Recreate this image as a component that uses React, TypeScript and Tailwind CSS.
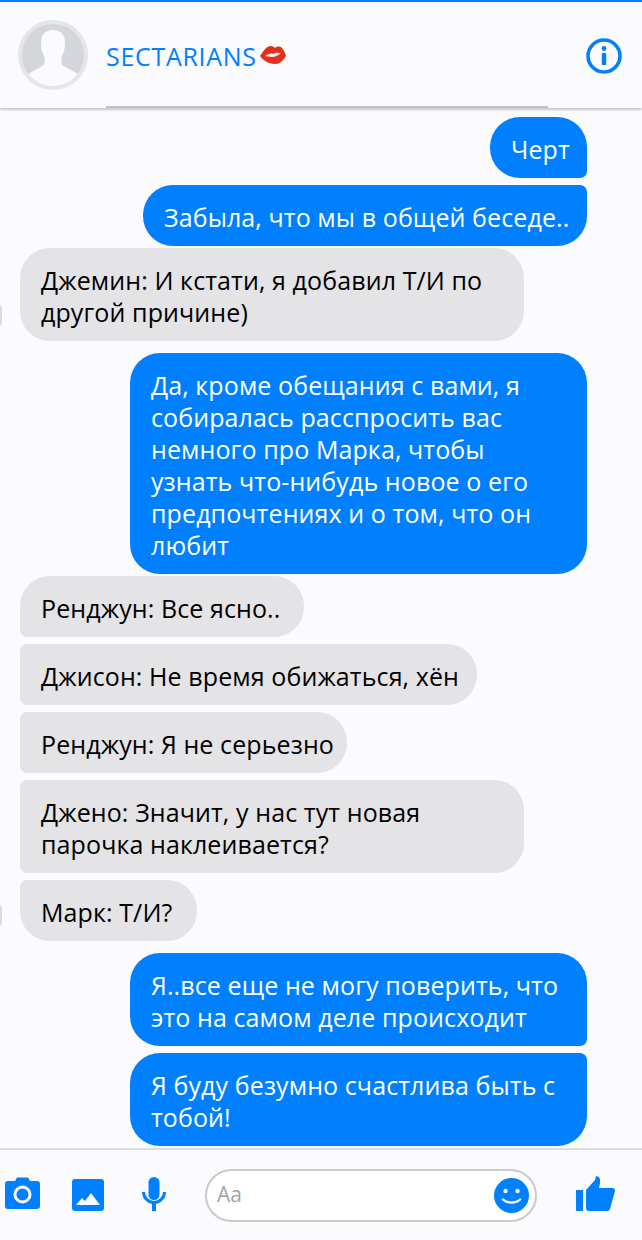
const FONT = "font-['Open_Sans',sans-serif]";

type Msg = {
  side: "left" | "right";
  lines: string[];
  width: string;
  top: string;
  corners: string;
  avatar?: boolean;
};

const messages: Msg[] = [
  { side: "right", lines: ["Черт"], width: "w-[97px]", top: "mt-[9px]", corners: "rounded-tl-[30px] rounded-tr-[30px] rounded-br-[7px] rounded-bl-[30px]" },
  { side: "right", lines: ["Забыла, что мы в общей беседе.."], width: "w-[444px]", top: "mt-[7px]", corners: "rounded-tl-[30px] rounded-tr-[7px] rounded-br-[30px] rounded-bl-[30px]" },
  { side: "left", lines: ["Джемин: И кстати, я добавил Т/И по", "другой причине)"], width: "w-[504px]", top: "mt-[2px]", corners: "rounded-[30px]", avatar: true },
  {
    side: "right",
    lines: [
      "Да, кроме обещания с вами, я",
      "собиралась расспросить вас",
      "немного про Марка, чтобы",
      "узнать что-нибудь новое о его",
      "предпочтениях и о том, что он",
      "любит",
    ],
    width: "w-[457px]",
    top: "mt-[12px]",
    corners: "rounded-[30px]",
  },
  { side: "left", lines: ["Ренджун: Все ясно.."], width: "w-[284px]", top: "mt-[2px]", corners: "rounded-tl-[30px] rounded-tr-[30px] rounded-br-[30px] rounded-bl-[7px]" },
  { side: "left", lines: ["Джисон: Не время обижаться, хён"], width: "w-[457px]", top: "mt-[7px]", corners: "rounded-tl-[7px] rounded-tr-[30px] rounded-br-[30px] rounded-bl-[7px]" },
  { side: "left", lines: ["Ренджун: Я не серьезно"], width: "w-[327px]", top: "mt-[7px]", corners: "rounded-tl-[7px] rounded-tr-[30px] rounded-br-[30px] rounded-bl-[7px]" },
  { side: "left", lines: ["Джено: Значит, у нас тут новая", "парочка наклеивается?"], width: "w-[504px]", top: "mt-[7px]", corners: "rounded-tl-[7px] rounded-tr-[30px] rounded-br-[30px] rounded-bl-[7px]" },
  { side: "left", lines: ["Марк: Т/И?"], width: "w-[177px]", top: "mt-[7px]", corners: "rounded-tl-[7px] rounded-tr-[30px] rounded-br-[30px] rounded-bl-[30px]", avatar: true },
  { side: "right", lines: ["Я..все еще не могу поверить, что", "это на самом деле происходит"], width: "w-[457px]", top: "mt-[12px]", corners: "rounded-tl-[30px] rounded-tr-[30px] rounded-br-[7px] rounded-bl-[30px]" },
  { side: "right", lines: ["Я буду безумно счастлива быть с", "тобой!"], width: "w-[457px]", top: "mt-[7px]", corners: "rounded-tl-[30px] rounded-tr-[7px] rounded-br-[30px] rounded-bl-[30px]" },
];

function Bubble({ msg }: { msg: Msg }) {
  const isRight = msg.side === "right";
  return (
    <div className={`relative ${msg.top} flex ${isRight ? "justify-end pr-[55px]" : "justify-start pl-[20px]"}`}>
      {msg.avatar && <span className="absolute left-[-13px] bottom-[12px] h-[27px] w-[15px] rounded-full bg-[#dcdbde]" />}
      <div
        className={`${msg.width} ${msg.corners} ${
          isRight ? "bg-[#0080ff] text-white" : "bg-[#e4e3e6] text-black"
        } px-[21px] pt-[16px] pb-[13px] text-[25px] leading-[32px] tracking-[0.1px] whitespace-nowrap`}
      >
        {msg.lines.map((line) => (
          <div key={line}>{line}</div>
        ))}
      </div>
    </div>
  );
}

function Avatar() {
  return (
    <svg width="70" height="70" viewBox="0 0 70 70" className="shrink-0">
      <clipPath id="avatarClip">
        <circle cx="35" cy="35" r="31" />
      </clipPath>
      <circle cx="35" cy="35" r="33" fill="#d3d7dc" stroke="#e5e6ea" strokeWidth="4" />
      <g clipPath="url(#avatarClip)" fill="#fbfafd">
        <path d="M35 10c8 0 12 5 12 13 0 5-1 9-3 13-1 3-1 6 0 9l16 9v16H10V54l16-9c1-3 1-6 0-9-2-4-3-8-3-13 0-8 4-13 12-13z" />
      </g>
    </svg>
  );
}

function Kiss() {
  return (
    <svg width="26" height="20" viewBox="0 0 26 20" className="ml-[3px] mt-[-2px] shrink-0">
      <path d="M0 11C3 7 6 1 11 1c2 0 3 1 4 2 2-2 5-2 7 0 2 2 3 5 4 8-2 3-5 8-11 8C8 19 3 15 0 11z" fill="#e2301f" />
      <path d="M5 11c3-2 6-3 8-2 3-2 6-1 8-1-2 2-6 4-9 4-3 0-5-1-7-1z" fill="#fdeeee" />
    </svg>
  );
}

export default function App() {
  return (
    <div className={`relative flex h-[1240px] w-[642px] flex-col overflow-hidden bg-[#fbfafd] ${FONT}`}>
      <header className="relative flex h-[108px] shrink-0 items-center border-t-[2px] border-[#0080ff] bg-[#fbfafd] pl-[18px] pr-[20px] shadow-[0_2px_2px_rgba(0,0,0,0.2)]">
        <Avatar />
        <div className="ml-[18px] mt-[2px] flex items-center text-[25px] leading-[30px] tracking-[0.7px] text-[#0080ff]">
          <span>SECTARIANS</span>
          <Kiss />
        </div>
        <svg width="36" height="36" viewBox="0 0 36 36" className="ml-auto mt-[2px]">
          <circle cx="18" cy="18" r="16" fill="none" stroke="#0080ff" strokeWidth="3.5" />
          <circle cx="18" cy="10.5" r="2.4" fill="#0080ff" />
          <rect x="15.8" y="15" width="4.4" height="12" rx="1" fill="#0080ff" />
        </svg>
        {/* darker run of the divider under the title */}
        <span className="absolute bottom-0 left-[106px] h-[2px] w-[442px] bg-[#c4c3c6]" />
      </header>

      <main className="h-[1040px] shrink-0">
        {messages.map((m) => (
          <Bubble key={m.lines[0]} msg={m} />
        ))}
      </main>

      <footer className="flex h-[92px] shrink-0 items-center border-t-[2px] border-[#dedddf] pl-[5px]">
        {/* camera */}
        <svg width="35" height="32" viewBox="0 0 35 32" className="mt-[-5px]">
          <path d="M3 4h7l2-3.5h11L25 4h7a3 3 0 0 1 3 3v22a3 3 0 0 1-3 3H3a3 3 0 0 1-3-3V7a3 3 0 0 1 3-3z" fill="#0080ff" />
          <circle cx="17.5" cy="17.5" r="7.5" fill="none" stroke="#fbfafd" strokeWidth="3" />
        </svg>
        {/* picture */}
        <svg width="32" height="32" viewBox="0 0 32 32" className="ml-[32px] mt-[-1px]">
          <rect width="32" height="32" rx="3" fill="#0080ff" />
          <path d="M4 26l6-7 3 3 6-8 9 12z" fill="#fbfafd" />
        </svg>
        {/* mic */}
        <svg width="24" height="34" viewBox="0 0 24 34" className="ml-[38px] mt-[-2px]">
          <rect x="6.5" y="0" width="11" height="23" rx="5.5" fill="#0080ff" />
          <path d="M1.5 15a10.5 10.5 0 0 0 21 0" fill="none" stroke="#0080ff" strokeWidth="3" />
          <rect x="10" y="25" width="4" height="9" fill="#0080ff" />
        </svg>
        <div className="ml-[39px] flex h-[53px] w-[332px] items-center rounded-full border-[2px] border-[#cbc9cc] bg-white pl-[10px] pr-[6px]">
          <span className="text-[21px] text-[#a3a3a6]">Aa</span>
          <svg width="35" height="35" viewBox="0 0 35 35" className="ml-auto">
            <circle cx="17.5" cy="17.5" r="17.5" fill="#0080ff" />
            <circle cx="11.5" cy="13" r="2.2" fill="#fff" />
            <circle cx="23.5" cy="13" r="2.2" fill="#fff" />
            <path d="M9 21.5c4 4 13 4 17 0" fill="none" stroke="#fff" strokeWidth="2.4" strokeLinecap="round" />
          </svg>
        </div>
        <svg width="39" height="35" viewBox="0 0 39 35" className="ml-[39px] mt-[-4px]">
          <rect x="0" y="14" width="7" height="21" fill="#0080ff" />
          <path d="M10 14 19 4l1-4 3 1c2 3 1 7 0 11h13c2 0 3 1 3 3l-5 18c-.5 1.5-1.5 2-3 2H13c-2 0-3-1-3-3z" fill="#0080ff" />
        </svg>
      </footer>
    </div>
  );
}
